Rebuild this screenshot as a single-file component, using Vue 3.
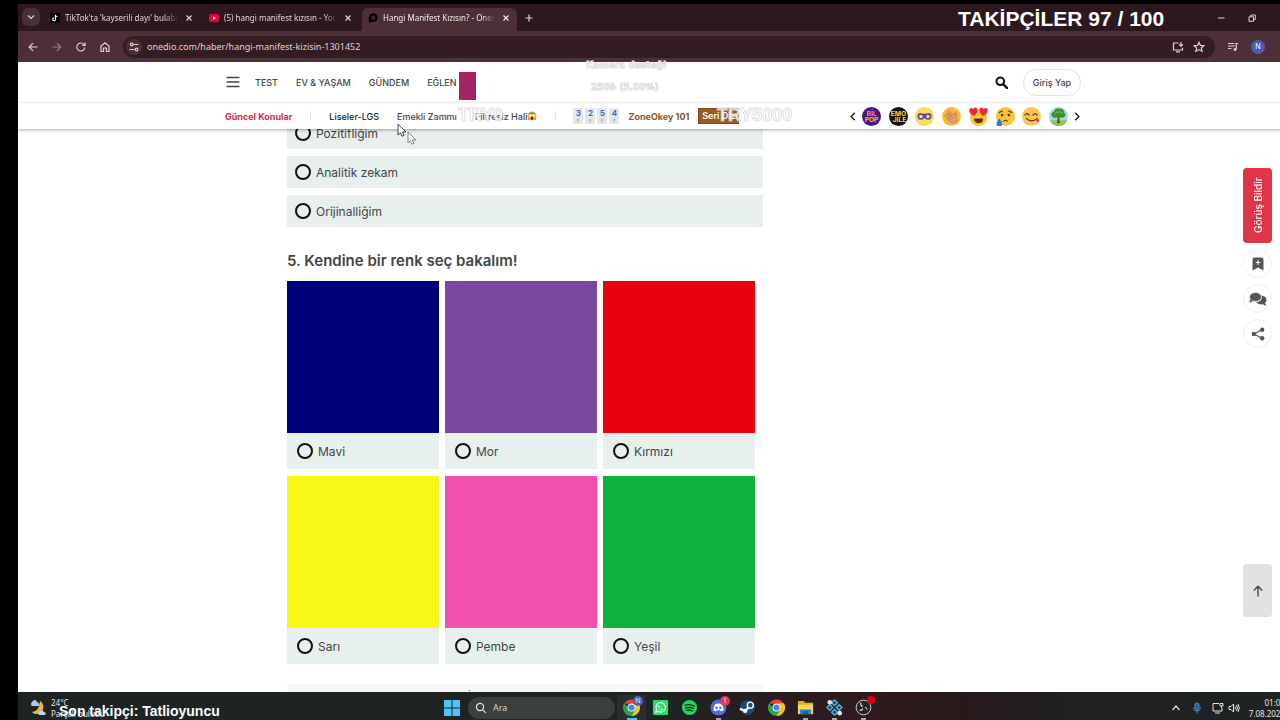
<template>
  <div class="stream">
    <div class="screen">
      <div class="tabs">
        <button class="tab-search" aria-label="Sekme ara">
          <svg viewBox="0 0 10 10"><path d="M2 3.5 5 6.5 8 3.5" class="line" /></svg>
        </button>
        <div v-for="tab in tabs" :key="tab.title" class="tab" :class="{ active: tab.active }">
          <svg v-if="tab.icon === 'tiktok'" class="favicon" viewBox="0 0 10 10">
            <rect width="10" height="10" fill="#050505" />
            <path d="M5.5 1.8v4.5a1.4 1.4 0 1 1-1.4-1.4M5.5 2c.2 1.1.9 1.7 2 1.8" fill="none" stroke="#fff" stroke-width="1.1" />
          </svg>
          <svg v-else-if="tab.icon === 'youtube'" class="favicon" viewBox="0 0 10 10">
            <rect y="1" width="10" height="8" rx="2" fill="#f0003c" />
            <path d="M4 3.3 7 5 4 6.7z" fill="#fff" />
          </svg>
          <svg v-else class="favicon" viewBox="0 0 10 10">
            <circle cx="5.3" cy="4.7" r="3.3" fill="#3a2328" stroke="#000" stroke-width="2.2" />
            <path d="M.8 4v6l3-1.5z" />
          </svg>
          <button class="tab-title">{{ tab.title }}</button>
          <button class="tab-close" aria-label="Sekmeyi kapat">
            <svg viewBox="0 0 10 10"><path d="M2.5 2.5l5 5M7.5 2.5l-5 5" class="line" /></svg>
          </button>
        </div>
        <button class="tab-new" aria-label="Yeni sekme">
          <svg viewBox="0 0 10 10"><path d="M5 1.5v7M1.5 5h7" class="line" /></svg>
        </button>
        <div class="window-buttons">
          <button aria-label="Küçült"><svg viewBox="0 0 10 10"><path d="M2 5h6.5" class="thin" /></svg></button>
          <button aria-label="Geri yükle">
            <svg viewBox="0 0 10 10"><path d="M2 3.8h4.5v4.5H2zM3.8 3.5V2h4.5v4.5H6.8" class="thin" /></svg>
          </button>
          <button aria-label="Kapat"><svg viewBox="0 0 10 10"><path d="M2 2l6 6M8 2 2 8" class="thin" /></svg></button>
        </div>
      </div>

      <div class="toolbar">
        <button aria-label="Geri"><svg viewBox="0 0 12 12"><path d="M10.5 6h-8M6 2.2 2.2 6 6 9.8" class="line" /></svg></button>
        <button aria-label="İleri" class="dim"><svg viewBox="0 0 12 12"><path d="M1.5 6h8M6 2.2 9.8 6 6 9.8" class="line" /></svg></button>
        <button aria-label="Yenile"><svg viewBox="0 0 12 12"><path d="M9.8 6.5A4 4 0 1 1 8.8 3.3L10 4.4M10 1.5v3H7" class="line" /></svg></button>
        <button aria-label="Ana sayfa"><svg viewBox="0 0 12 12"><path d="M2 5 6 1.8 10 5v5.5H7.5V7h-3v3.5H2z" class="line" /></svg></button>
        <div class="omnibox">
          <button class="site-info" aria-label="Site bilgileri">
            <svg viewBox="0 0 12 12"><path d="M2 3.5h1M6 3.5h4.5M1.5 8.5H6" class="line" /><circle cx="3.8" cy="3.5" r="1.4" class="line" /><circle cx="8.5" cy="8.5" r="1.4" class="line" /></svg>
          </button>
          <input v-model="url" class="url" aria-label="Adres" />
          <button aria-label="Yükle"><svg viewBox="0 0 12 12"><path d="M6.5 2H1.5v7h9V6.8M4 10.8h4M9 1v4M7.2 3.5 9 5.2l1.8-1.7" class="line" /></svg></button>
          <button aria-label="Yer işareti"><svg viewBox="0 0 12 12"><path d="m6 1.2 1.4 3.2 3.5.3-2.6 2.3.8 3.4L6 8.6l-3.1 1.8.8-3.4L1.1 4.7l3.5-.3z" class="line" /></svg></button>
        </div>
        <button aria-label="Medya"><svg viewBox="0 0 12 12"><path d="M1 2.5h6.5M1 5h6.5M1 7.5h3.5M9.2 8.5V2.5h2" class="line" /><circle cx="8" cy="8.5" r="1.4" fill="#e6cfd3" /></svg></button>
        <button class="avatar">N</button>
      </div>

      <div class="page">
        <header class="site-header">
          <nav class="main-nav wrap">
            <button class="burger" aria-label="Menü"><svg viewBox="0 0 14 12"><path d="M.5 1.5h13M.5 6h13M.5 10.5h13" stroke="#444" stroke-width="1.5" /></svg></button>
            <a v-for="item in navItems" :key="item" href="#">{{ item }}</a>
            <button class="search" aria-label="Ara">
              <svg viewBox="0 0 14 14"><circle cx="5.7" cy="5.7" r="4.1" fill="none" stroke="#111" stroke-width="2.2" /><path d="m8.8 8.8 4 4" stroke="#111" stroke-width="2.6" stroke-linecap="round" /></svg>
            </button>
            <button class="login">Giriş Yap</button>
          </nav>
          <div class="topic-bar">
            <div class="topics wrap">
              <a href="#" class="hot">Güncel Konular</a>
              <i class="divider"></i>
              <a href="#" class="dark">Liseler-LGS</a>
              <a href="#">Emekli Zammı</a>
              <a href="#" class="with-emoji">Filtresiz Hali
                <svg viewBox="0 0 20 20"><circle cx="10" cy="10" r="9" fill="#f6b928" /><path d="M2 8a9 9 0 0 1 16 0q-8-5-16 0" fill="#4b79c8" /><circle cx="6.5" cy="9" r="2.4" fill="#fff" /><circle cx="13.5" cy="9" r="2.4" fill="#fff" /><ellipse cx="10" cy="14.5" rx="2.6" ry="3.6" fill="#5b2e17" /><path d="M2 11v7l4-1zM18 11v7l-4-1z" fill="#e58c1f" /></svg>
              </a>
              <i class="divider"></i>
              <span class="tiles"><b v-for="n in tiles" :key="n">{{ n }}</b></span>
              <a href="#" class="okey">ZoneOkey 101</a>
              <a href="#" class="series">Seri Diz</a>
              <div class="reactions">
                <button class="arrow" aria-label="Önceki"><svg viewBox="0 0 8 12"><path d="M6 2 2 6l4 4" fill="none" stroke="#222" stroke-width="1.6" /></svg></button>
                <div class="emojis">
                  <a href="#" aria-label="Bil Pop"><svg viewBox="0 0 20 20"><circle cx="10" cy="10" r="10" fill="#4a167c" /><text x="10" y="9.5" class="badge-text" fill="#f79b35">BİL</text><text x="10" y="16" class="badge-text" fill="#fbbf3c">POP</text></svg></a>
                  <a href="#" aria-label="Emojile"><svg viewBox="0 0 20 20"><circle cx="10" cy="10" r="10" fill="#14120c" /><text x="10" y="9.5" class="badge-text" fill="#ffd33b">EMO</text><text x="11" y="16" class="badge-text" fill="#ffd33b">JİLE</text></svg></a>
                  <a href="#" aria-label="Maske"><svg viewBox="0 0 20 20"><circle cx="10" cy="10" r="10" fill="#fbdc5c" /><path d="M2.5 8.5Q3 6 6.5 6.5q3.5 1 7 0Q17 6 17.5 8.5q.5 5-3.5 5-2.5 0-4-2-1.5 2-4 2-4 0-3.5-5" fill="#67518d" /><circle cx="6.3" cy="10" r="1.7" fill="#f7e6f1" /><circle cx="13.7" cy="10" r="1.7" fill="#f7e6f1" /></svg></a>
                  <a href="#" aria-label="Alkış"><svg viewBox="0 0 20 20"><circle cx="10" cy="10" r="10" fill="#f6bd35" /><path d="M4 8q0-2 2-1l3 2-3-4q0-2 2-1l5 5 0-3q1-2 2 0l1 6q0 5-5 5-3 0-5-4L3 9z" fill="#e59a72" stroke="#bd6b4b" stroke-width=".6" /><path d="m6 10 4 4M8 8l4 4" stroke="#bd6b4b" stroke-width=".7" /></svg></a>
                  <a href="#" aria-label="Bayıldım"><svg viewBox="0 0 20 20"><circle cx="10" cy="11" r="9" fill="#fbc72e" /><path d="M4.8 9.5Q0 6.5.2 3.3 1-.5 4.5 2 7-.8 8.8 2q1 4-4 7.5M15.2 9.5q-5-3.5-4-7.5 1.8-2.8 4.3 0 3.5-2.5 4.3 1.3.2 3.2-4.6 6.2" fill="#f0253c" /><path d="M5 12h10q-.5 5-5 5t-5-5" fill="#6b2b17" /></svg></a>
                  <a href="#" aria-label="Üzgün"><svg viewBox="0 0 20 20"><circle cx="10" cy="10" r="10" fill="#f9c535" /><circle cx="6.5" cy="8.5" r="1.4" fill="#5a3513" /><circle cx="13.5" cy="8.5" r="1.4" fill="#5a3513" /><path d="m3 6 4-2M17 6l-4-2M7.5 15.5q2.5-3 5 0" fill="none" stroke="#5a3513" stroke-width="1.2" /><path d="M3.5 12q-3 4-3 5.5a3 3 0 0 0 6 0Q6.5 16 3.5 12" fill="#277fdd" /></svg></a>
                  <a href="#" aria-label="Leziz"><svg viewBox="0 0 20 20"><circle cx="10" cy="10" r="10" fill="#f9c850" /><path d="M3 8.5q2-3 4.5 0M11.5 8.5q2.5-3 4.5 0M4.5 12q5.5 5 11.5 0" fill="none" stroke="#5a3513" stroke-width="1.3" stroke-linecap="round" /><path d="m14 13.5 2.5-1.5q2.5 2.5 1 3.5t-3.5-2" fill="#e53f53" /></svg></a>
                  <a href="#" aria-label="Doğa"><svg viewBox="0 0 20 20"><circle cx="10" cy="10" r="10" fill="#a4d4ec" /><path d="M.8 14h18.4A10 10 0 0 1 .8 14" fill="#8cc94f" /><path d="m9.3 9-.8 8h3L10.7 9" fill="#694526" /><path d="M3 10Q1 6 5 5q2-4.500 6-3 5-.5 5 4 3 3-1 5-3 1-5-1-4 3-7 0" fill="#3d8f30" /><path d="M6 7q2-3 4-1 3-2 4 1" fill="none" stroke="#70b846" stroke-width="1.3" /></svg></a>
                </div>
                <button class="arrow" aria-label="Sonraki"><svg viewBox="0 0 8 12"><path d="m2 2 4 4-4 4" fill="none" stroke="#222" stroke-width="1.6" /></svg></button>
              </div>
            </div>
          </div>
        </header>

        <main class="wrap">
          <div class="quiz">
            <div class="answers">
              <label v-for="answer in answers" :key="answer" class="answer">
                <input v-model="trait" type="radio" name="trait" :value="answer" />{{ answer }}
              </label>
            </div>
            <h2>5. Kendine bir renk seç bakalım!</h2>
            <div class="colors">
              <label v-for="c in colors" :key="c.name" class="color">
                <span class="swatch" :class="c.tone"></span>
                <span class="color-name"><input v-model="color" type="radio" name="color" :value="c.name" />{{ c.name }}</span>
              </label>
            </div>
            <div class="next">İçeriğin Devamı Aşağıda</div>
          </div>
        </main>

        <aside class="side">
          <button class="feedback">Görüş Bildir</button>
          <button class="round" aria-label="Kaydet"><svg viewBox="0 0 14 14"><path d="M1.5 2.5q0-2 2-2h7q2 0 2 2v11L7 10.5l-5.5 3z" fill="#555" /><path d="M7 3.2v4.6M4.7 5.5h4.6" stroke="#fff" stroke-width="1.2" /></svg></button>
          <button class="round comments" aria-label="Yorumlar"><svg viewBox="0 0 18 14"><path d="M12 3.5q5.5.5 5.5 4.5 0 1.8-1.5 3l1.5 2.5q-2 0-3.5-1.2-5 .7-7-2.3 6 0 5.5-5z" fill="#555" /><ellipse cx="6.5" cy="5" rx="6" ry="4.5" fill="#555" stroke="#fff" stroke-width=".7" /><path d="M1.5 7 .2 10.5q2 0 3.5-1.2z" fill="#555" /></svg></button>
          <button class="round" aria-label="Paylaş"><svg viewBox="0 0 14 14"><path d="M11 2.7 3 7l8 4.3" fill="none" stroke="#555" stroke-width="1.3" /><circle cx="11.2" cy="2.8" r="2.2" fill="#555" /><circle cx="2.8" cy="7" r="2.2" fill="#555" /><circle cx="11.2" cy="11.2" r="2.2" fill="#555" /></svg></button>
        </aside>
        <button class="to-top" aria-label="Yukarı çık"><svg viewBox="0 0 12 12"><path d="M6 11.5V1.5M1.8 5.5 6 1.3l4.2 4.2" fill="none" stroke="#444" stroke-width="1.4" /></svg></button>
      </div>

      <footer class="taskbar">
        <div class="weather">
          <svg viewBox="0 0 18 18"><path d="M11 2a7 7 0 0 1 0 12 6 6 0 0 1-8-1q7 0 8-11" fill="#eeb34a" /><path d="M3 7a2.5 2.5 0 0 1 0-4q3-4 5 0 3 1 2 4z" fill="#aecbf1" /><path d="M10 16a2 2 0 0 1 0-3q3-3 5 0 3 1 1 3z" fill="#bdd6f5" /></svg>
          <div>24°C<br />Parçalı bulutlu</div>
        </div>
        <div class="dock">
          <button class="start" aria-label="Başlat"><svg viewBox="0 0 16 16"><path d="M0 0h7.5v7.5H0zM8.5 0H16v7.5H8.5zM0 8.5h7.5V16H0zM8.5 8.5H16V16H8.5z" fill="#50c4f5" /></svg></button>
          <label class="task-search">
            <svg viewBox="0 0 12 12"><circle cx="5" cy="5" r="3.6" class="line" /><path d="m7.8 7.8 3 3" class="line" /></svg>
            <input type="text" placeholder="Ara" aria-label="Ara" />
          </label>
          <button v-for="(app, i) in apps" :key="i" class="app" :class="{ current: i === 0, running: app.running }" :aria-label="app.name">
            <svg v-if="app.name === 'Chrome'" viewBox="0 0 18 18">
              <path d="M1.2 5A9 9 0 0 1 16.8 5H9z" fill="#e64335" /><path d="M1.2 4.5A9 9 0 0 0 9 18l4-6.5-4 1z" fill="#2ba24c" /><path d="M16.8 4.5A9 9 0 0 1 9 18l4-7-2-6.5z" fill="#fbc116" /><circle cx="9" cy="9" r="4.2" fill="#fff" /><circle cx="9" cy="9" r="3.3" fill="#4285f4" />
            </svg>
            <svg v-else-if="app.name === 'WhatsApp'" viewBox="0 0 18 18"><rect x="1" y="1" width="16" height="16" rx="1" fill="#25df67" /><path d="m4 14 .8-2.8a5 5 0 1 1 2 2z" fill="none" stroke="#fff" stroke-width="1.2" /><path d="m7 6.5 1 1.5-.5 1q1 1.5 2.5 1.8l1-.8 1.2 1q-1 1.2-3 .3-2.3-1-3-3.3 0-1.5.8-1.5" fill="#fff" /></svg>
            <svg v-else-if="app.name === 'Spotify'" viewBox="0 0 18 18"><circle cx="9" cy="9" r="8" fill="#1ed760" /><path d="M4.5 6.5q5-1.5 9.5 1M5 9.3q4.5-1.2 8 .8M5.5 12q3.5-1 6.5.7" fill="none" stroke="#152017" stroke-width="1.4" stroke-linecap="round" /></svg>
            <svg v-else-if="app.name === 'Discord'" viewBox="0 0 18 18"><circle cx="9" cy="9" r="8.5" fill="#5865e8" /><path d="M5.5 5.5Q9 4 12.5 5.5q2 3 2 6.5-1.5 1.2-3 1.3L10.8 12H7.2l-.7 1.3q-1.5-.1-3-1.3 0-3.5 2-6.5" fill="#fff" /><circle cx="7" cy="9.3" r="1.3" fill="#5865e8" /><circle cx="11" cy="9.3" r="1.3" fill="#5865e8" /></svg>
            <svg v-else-if="app.name === 'Steam'" viewBox="0 0 18 18"><circle cx="9" cy="9" r="8" fill="#174a78" /><path d="m1 10.5 5.5 2 5-5" fill="none" stroke="#fff" stroke-width="2.5" /><circle cx="12" cy="6.5" r="3.2" fill="#294f72" stroke="#fff" stroke-width="1.5" /><circle cx="6.5" cy="12.5" r="2.3" fill="#fff" /></svg>
            <svg v-else-if="app.name === 'Dosya Gezgini'" viewBox="0 0 18 18"><path d="M1 2h6l2 2h8v12H1z" fill="#e4a925" /><path d="M1 6h16v10H1z" fill="#ffd95c" /><path d="M3 11h12v5H3z" fill="#2988d7" /><path d="M6 13h6v3H6z" fill="#195c9d" /></svg>
            <svg v-else-if="app.name === 'Araçlar'" viewBox="0 0 18 18"><path d="m9 1 3 3-3 3-3-3zM4 6l3 3-3 3-3-3zM14 6l3 3-3 3-3-3zM9 11l3 3-3 3-3-3z" fill="#143952" stroke="#4db9e9" stroke-width="1.5" /><circle cx="4" cy="3.5" r="2.5" fill="#dbe7ef" /><circle cx="14.5" cy="15" r="2.5" fill="#dbe7ef" /></svg>
            <svg v-else viewBox="0 0 18 18"><circle cx="9" cy="9" r="7.8" fill="#252528" stroke="#d5d5d5" stroke-width="1" /><path d="M9 8q-4-1-3-4 0 5 3 5 3-1 4 2-2-3-4-2-1 4-4 3 4 0 4-4" fill="#ddd" stroke="#ddd" stroke-width=".9" /><circle cx="9" cy="9" r="1.5" fill="#252528" /></svg>
            <span v-if="app.badge" class="badge" :class="app.badgeTone">{{ app.badge }}</span>
            <span v-if="app.recording" class="badge recording"></span>
          </button>
        </div>
        <div class="tray">
          <button aria-label="Gizli simgeler"><svg viewBox="0 0 12 12"><path d="m2.5 8 3.5-4 3.5 4" class="line" /></svg></button>
          <button class="mic" aria-label="Mikrofon"><svg viewBox="0 0 12 12"><rect x="4" y="1" width="4" height="6.5" rx="2" fill="#2d5c8b" stroke="#4d91d0" /><path d="M2.5 5.5q0 3.5 3.5 3.5t3.5-3.5M6 9v2.5" fill="none" stroke="#4d91d0" /></svg></button>
          <button aria-label="Ağ"><svg viewBox="0 0 12 12"><path d="M7 1.5H1v7.5h9V6M3 11h5M8 1.5h3v2.5H8zM9.5 4v2" class="thin" /></svg></button>
          <button class="volume" aria-label="Ses"><svg viewBox="0 0 12 12"><path d="M1 4.5h2L5.5 2v8L3 7.5H1zM7 4.5q1 1.5 0 3M8.5 3q2 3 0 6M10 2q2.6 4 0 8" class="thin" /></svg></button>
          <div class="clock">01:00<br />7.08.2025</div>
        </div>
      </footer>
    </div>

    <div class="overlay goal">TAKİPÇİLER 97 / 100</div>
    <div class="overlay last-follower">Son takipçi: Tatlioyuncu</div>
    <div class="overlay support">Kamera desteği</div>
    <div class="overlay amount">250₺ (5.00%)</div>
    <div class="overlay progress"></div>
    <div class="overlay money start-money">TRY0</div>
    <div class="overlay money end-money">TRY5000</div>
    <svg class="overlay cursor" viewBox="0 0 20 24"><path d="M1 1v11l2.5-2.2 1.5 3.5 2-1-1.6-3.3H9z" fill="#fff" stroke="#333" stroke-width=".9" /><path d="M11 9v11l2.5-2.2 1.5 3.5 2-1-1.6-3.3H19z" fill="#fff" stroke="#777" stroke-width=".9" /></svg>
  </div>
</template>

<script setup>
import { ref } from "vue";

const url = ref("onedio.com/haber/hangi-manifest-kizisin-1301452");
const trait = ref("");
const color = ref("");

const tabs = [
  { title: "TikTok'ta 'kayserili dayı' bulabilirsin", icon: "tiktok" },
  { title: "(5) hangi manifest kızısın - YouTube", icon: "youtube" },
  { title: "Hangi Manifest Kızısın? - Onedio", icon: "onedio", active: true },
];

const navItems = ["TEST", "EV & YAŞAM", "GÜNDEM", "EĞLEN"];
const tiles = [3, 2, 5, 4];
const answers = ["Pozitifliğim", "Analitik zekam", "Orijinalliğim"];

const colors = [
  { name: "Mavi", tone: "blue" },
  { name: "Mor", tone: "purple" },
  { name: "Kırmızı", tone: "red" },
  { name: "Sarı", tone: "yellow" },
  { name: "Pembe", tone: "pink" },
  { name: "Yeşil", tone: "green" },
];

const apps = [
  { name: "Chrome", badge: "N", badgeTone: "profile" },
  { name: "WhatsApp" },
  { name: "Spotify" },
  { name: "Discord", badge: "1", badgeTone: "alert", running: true },
  { name: "Steam" },
  { name: "Chrome" },
  { name: "Dosya Gezgini", running: true },
  { name: "Araçlar", running: true },
  { name: "OBS", recording: true, running: true },
];
</script>

<style>
body {
  margin: 0;
  background: #000;
}
</style>

<style scoped>
* {
  box-sizing: border-box;
}

button,
input {
  margin: 0;
  padding: 0;
  border: 0;
  background: none;
  color: inherit;
  font: inherit;
}

button {
  display: flex;
  align-items: center;
  justify-content: center;
}

a {
  color: inherit;
  text-decoration: none;
}

svg {
  display: block;
  flex: none;
}

.line {
  fill: none;
  stroke: currentColor;
  stroke-width: 1.2;
}

.thin {
  fill: none;
  stroke: currentColor;
  stroke-width: 1;
}

.stream {
  position: relative;
  display: flex;
  height: 100vh;
  padding: 4px 0 0 18px;
  overflow: hidden;
  background: #000;
  font-family: Inter, sans-serif;
}

/* the captured desktop runs a little past the right edge */
.screen {
  display: flex;
  flex: 1;
  flex-direction: column;
  min-width: 0;
  margin-right: -8px;
}

.tabs {
  display: flex;
  flex: none;
  align-items: flex-end;
  height: 27px;
  padding-left: 4px;
  background: #2e181f;
  color: #e6cfd3;
  font: 8px "Noto Sans", sans-serif;
}

.tab-search {
  width: 18px;
  height: 18px;
  margin: 0 4px 5px 0;
  border-radius: 6px;
  background: #4a2f35;
}

.tabs svg {
  width: 10px;
  height: 10px;
}

.tab {
  display: flex;
  align-items: center;
  width: 159px;
  height: 23px;
  padding: 0 9px 4px 6px;
}

.tab.active {
  width: 155px;
  padding-right: 6px;
  border-radius: 6px 6px 0 0;
  background: #4d3037;
  color: #f6e8ea;
}

.tab-title {
  display: block;
  flex: 1;
  min-width: 0;
  margin: 0 6px 0 5px;
  overflow: hidden;
  text-align: left;
  white-space: nowrap;
  mask-image: linear-gradient(90deg, #000 88%, transparent);
}

.tab-new {
  width: 24px;
  height: 19px;
  margin-bottom: 4px;
}

.window-buttons {
  display: flex;
  gap: 21px;
  height: 27px;
  margin-left: auto;
}

.toolbar {
  display: flex;
  flex: none;
  align-items: center;
  height: 31px;
  padding: 0 23px 0 9px;
  gap: 12px;
  background: #4d3037;
  color: #e6cfd3;
}

.toolbar svg {
  width: 12px;
  height: 12px;
}

.dim {
  opacity: 0.5;
}

.omnibox {
  display: flex;
  flex: 1;
  align-items: center;
  gap: 9px;
  height: 22px;
  padding: 0 10px 0 3px;
  border-radius: 11px;
  background: #341c23;
}

.site-info {
  width: 16px;
  height: 16px;
  border-radius: 50%;
  background: #4a2f35;
}

.url {
  flex: 1;
  height: 20px;
  margin-left: -4px;
  outline: 0;
  font: 9px "Noto Sans", sans-serif;
}

.avatar {
  width: 14px;
  height: 14px;
  border-radius: 50%;
  background: #4b5bb8;
  color: #fff;
  font-size: 7px;
}

.page {
  position: relative;
  flex: 1;
  min-height: 0;
  overflow: hidden;
  background: #fff;
}

.wrap {
  max-width: 856px;
  margin: 0 auto;
}

.site-header {
  position: relative;
  z-index: 1;
  background: #fff;
  box-shadow: 0 1px 3px rgba(0, 0, 0, 0.35);
  color: #444;
  font-size: 9px;
  font-weight: 500;
}

.main-nav {
  display: flex;
  align-items: center;
  gap: 18px;
  height: 40px;
}

.burger {
  margin: 0 -3px 0 1px;
}

.burger svg {
  width: 14px;
  height: 12px;
}

.search {
  margin-left: auto;
}

.search svg {
  width: 13px;
  height: 13px;
}

.login {
  width: 58px;
  height: 27px;
  margin-left: -3px;
  border: 1px solid #e2e2e2;
  border-radius: 14px;
}

.topic-bar {
  border-top: 1px solid #eaeaea;
}

.topics {
  display: flex;
  align-items: center;
  gap: 18px;
  height: 26px;
  white-space: nowrap;
}

.hot {
  color: #d92b4b;
  font-weight: 700;
}

.dark {
  color: #222;
}

.divider {
  width: 1px;
  height: 10px;
  background: #e5e5e5;
}

.with-emoji {
  display: flex;
  align-items: center;
}

.with-emoji svg {
  width: 10px;
  height: 10px;
}

.tiles {
  display: flex;
  gap: 2px;
  margin: 0 -9px 0 -1px;
}

.tiles b {
  width: 10px;
  height: 16px;
  border-radius: 1px;
  background: radial-gradient(circle at 5px 12px, #c3c3c3 1px, transparent 2px) #e6e6ea;
  color: #3d64d8;
  font-size: 8px;
  line-height: 10px;
  text-align: center;
}

.okey {
  margin-right: -9px;
  color: #8f551b;
  font-weight: 700;
}

.series {
  width: 41px;
  height: 16px;
  border: 1px solid #7d4617;
  background: #9a5d21;
  color: #fff;
  font-weight: 600;
  line-height: 14px;
  text-align: center;
}

.reactions {
  display: flex;
  align-items: center;
  gap: 5px;
  margin-left: auto;
}

.arrow svg {
  width: 8px;
  height: 11px;
}

.emojis {
  display: flex;
  justify-content: space-between;
  width: 206px;
}

.emojis svg {
  width: 19px;
  height: 19px;
}

.badge-text {
  font: bold 7px Inter, sans-serif;
  text-anchor: middle;
}

.quiz {
  width: 476px;
  margin: -12px 0 0 62px;
  color: #444;
  font-size: 12px;
}

.answers {
  display: grid;
  gap: 7px;
}

.answer,
.color-name {
  display: flex;
  align-items: center;
  gap: 5px;
  height: 32px;
  padding-left: 8px;
  background: #e7f0ed;
}

.color-name {
  height: 36px;
  padding-left: 10px;
}

input[type="radio"] {
  width: 16px;
  height: 16px;
  border: 2px solid #111;
  border-radius: 50%;
  appearance: none;
}

input[type="radio"]:checked {
  background: radial-gradient(#111 4px, transparent 5px);
}

h2 {
  margin: 24px 0 10px;
  font-size: 15px;
  font-weight: 600;
  line-height: 20px;
}

.colors {
  display: grid;
  grid-template-columns: repeat(3, 152px);
  gap: 7px 6px;
}

.swatch {
  display: block;
  aspect-ratio: 1;
}

.blue {
  background: #00007a;
}

.purple {
  background: #7b489f;
}

.red {
  background: #e9000c;
}

.yellow {
  background: #f8f818;
}

.pink {
  background: #f252ae;
}

.green {
  background: #0db140;
}

.next {
  height: 32px;
  margin-top: 20px;
  padding-top: 6px;
  background: #f6f8f9;
  font-size: 10px;
  text-align: center;
}

.side {
  position: absolute;
  top: 106px;
  right: 16px;
  display: flex;
  flex-direction: column;
  gap: 6px;
}

.feedback {
  width: 29px;
  height: 75px;
  border-radius: 4px;
  background: #e03447;
  color: #fff;
  font-size: 10px;
  font-weight: 500;
  writing-mode: vertical-rl;
  transform: rotate(180deg);
}

.round {
  width: 29px;
  height: 29px;
  border: 1px solid #eee;
  border-radius: 50%;
}

.round svg {
  width: 14px;
  height: 14px;
}

.comments svg {
  width: 18px;
}

.to-top {
  position: absolute;
  right: 16px;
  bottom: 75px;
  width: 29px;
  height: 53px;
  border-radius: 4px;
  background: #e2e2e2;
}

.to-top svg {
  width: 12px;
  height: 12px;
}

.taskbar {
  display: grid;
  flex: none;
  grid-template-columns: 1fr auto 1fr;
  align-items: center;
  height: 28px;
  padding: 3px 3px 0 11px;
  background: linear-gradient(90deg, #1e2323 50%, #301a1d 66%, #28191b 74%, #202020 82%, #1e2323);
  color: #e5e5e5;
  font: 8px/11px "Noto Sans", sans-serif;
}

.weather {
  display: flex;
  align-items: center;
  gap: 4px;
}

.weather svg {
  width: 18px;
  height: 18px;
}

.dock {
  display: flex;
  align-items: center;
  padding-left: 8px;
}

.start svg {
  width: 16px;
  height: 16px;
}

.task-search {
  display: flex;
  align-items: center;
  gap: 6px;
  width: 147px;
  height: 22px;
  margin: 0 2px 0 8px;
  padding-left: 7px;
  border-radius: 11px;
  background: #3a4040;
}

.task-search svg {
  width: 12px;
  height: 12px;
}

.task-search input {
  width: 100px;
  font-size: 9px;
}

.task-search input::placeholder {
  color: #d2d2d2;
  opacity: 1;
}

.app {
  position: relative;
  width: 29px;
  height: 25px;
}

.app svg {
  width: 17px;
  height: 17px;
}

.current {
  background: linear-gradient(#4cc2ff, #4cc2ff) center bottom / 10px 2px no-repeat #292e2f;
}

.running {
  background: linear-gradient(#aaa, #aaa) center bottom / 5px 2px no-repeat;
}

.badge {
  position: absolute;
  top: 1px;
  right: 3px;
  width: 10px;
  height: 10px;
  border-radius: 50%;
  font-size: 7px;
  line-height: 10px;
  text-align: center;
}

.profile {
  background: #5361bd;
}

.alert {
  background: #dd3d4c;
}

.recording {
  width: 8px;
  height: 8px;
  background: #e60012;
}

.tray {
  display: flex;
  align-items: center;
  justify-content: flex-end;
  gap: 9px;
}

.tray svg {
  width: 12px;
  height: 12px;
}

.volume {
  margin-left: -5px;
}

.clock {
  text-align: right;
}

.overlay {
  position: absolute;
  z-index: 2;
  color: #fff;
  white-space: nowrap;
  pointer-events: none;
}

.goal {
  top: 7px;
  left: 958px;
  font: bold 21px/24px "Liberation Sans", sans-serif;
}

.last-follower {
  bottom: 0;
  left: 59px;
  font: bold 14px/18px "Liberation Sans", sans-serif;
}

.support,
.amount {
  font: bold 9px/12px "DejaVu Sans", sans-serif;
  -webkit-text-stroke: 1px #e3dce3;
}

.support {
  top: 59px;
  left: 586px;
}

.amount {
  top: 81px;
  left: 591px;
}

.progress {
  top: 72px;
  left: 459px;
  width: 17px;
  height: 28px;
  background: #a32463;
}

.money {
  top: 105px;
  font: bold 18px/20px "Liberation Sans", sans-serif;
  -webkit-text-stroke: 1px #ddd5dd;
  opacity: 0.85;
}

.start-money {
  left: 458px;
}

.end-money {
  left: 717px;
}

.cursor {
  top: 123px;
  left: 397px;
  width: 20px;
  height: 24px;
}
</style>
